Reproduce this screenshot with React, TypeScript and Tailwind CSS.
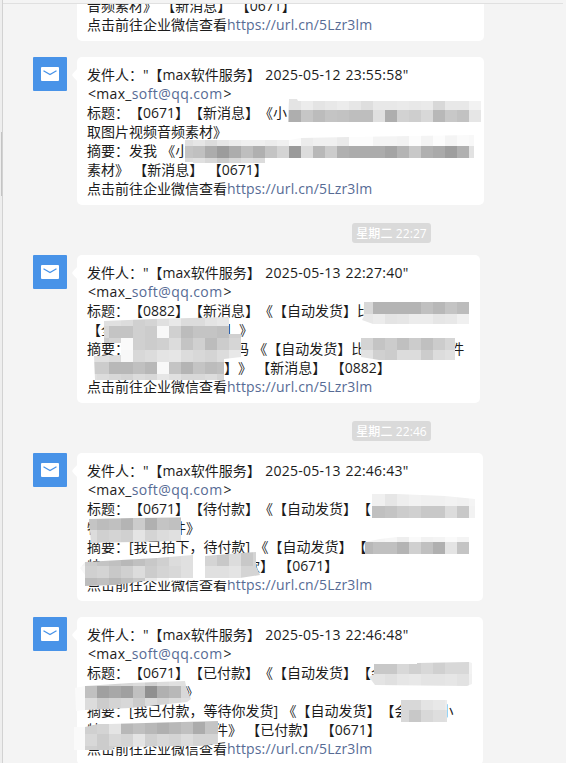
import type { ReactNode } from 'react';

interface MosaicPatch {
  // outline of the brushed area
  points: string;
  col: number;
  row: number;
  // grey levels (hex) for each 12px block, one string per row
  cells: string[];
}

interface MessageProps {
  top: number;
  time: string;
  className: string;
  patches: MosaicPatch[];
  children: ReactNode;
}

const BLOCK = 12;

const PATCHES_A: MosaicPatch[] = [
  {
    points: '289,99 297,99 298,101 482,101 482,122 288,122',
    col: 277,
    row: 98,
    cells: [
      'e4 e4 ec e4 e8 ec e6 de e8 e8 ea e8 ea d8 e8 e8 f2',
      'd0 ae c6 bc c4 c2 be be e0 ae d2 ce d8 b8 c8 c2 e6',
    ],
  },
  {
    points: '185,140 290,140 301,138 349,137 474,135 474,158 265,158 265,163 193,163 193,162 185,162',
    col: 181,
    row: 134,
    cells: [
      'e0 e6 dc e6 ec f0 f0 ec f0 fa ec f0 f0 ea fc fc f4 f4 f2 fc f4 fc f4 fa f8',
      'c4 c0 ac 9c ac be b0 c4 d4 9a dc b8 cc b0 ac ac ac a4 b4 c8 b0 aa 9e b0 e2',
      'dc e0 d8 cc d8 e0 dc',
    ],
  },
];

const PATCHES_B: MosaicPatch[] = [
  {
    points: '364,302 469,302 469,324 373,324 362,320 364,316',
    col: 361,
    row: 302,
    cells: ['d8 b4 b4 b4 b4 c0 b8 c4 bc c0', 'e8 ec e4 e6 ec ec e6 e8 f0 f2'],
  },
  {
    points:
      '104,321 153,319 229,317 229,334 241,334 241,357 224,359 224,380 95,380 94,356 121,355 121,343 104,343',
    col: 85,
    row: 314,
    cells: [
      'e0 e0 e0 dc d0 d4 e0 e8 dc dc e4 e8 e8',
      'd8 d8 c4 c4 d0 cc f8 d0 bc c4 c4 c0 d0',
      'd8 cc d4 fa d0 cc d0 dc c4 d0 bc cc d6',
      'e0 e0 dc f8 d8 dc e4 e6 dc d8 d4 dc e8',
      'cc cc b8 b8 c0 b8 f8 c4 b4 c4 bc c0 c0',
      'e0 dc d8 d4 dc d8 e6 e0 d8 d8 dc d4 d4',
    ],
  },
  {
    points: '361,338 455,338 455,360 379,360 361,357',
    col: 361,
    row: 338,
    cells: ['d4 c4 cc c0 cc c0 cc d6', 'e2 d0 cc dc dc cc dc e0'],
  },
];

const PATCHES_C: MosaicPatch[] = [
  {
    points: '372,494 397,494 445,496 475,499 475,518 372,518',
    col: 361,
    row: 494,
    cells: ['f0 f0 e6 ee f2 f0 f0 f2 f0 f4', 'c0 c0 c4 cc d0 c8 c8 dc c8 f2'],
  },
  {
    points: '89,519 181,517 181,541 91,543',
    col: 85,
    row: 506,
    cells: ['dc dc dc dc dc dc dc dc', 'c4 bc c0 b4 cc b0 c4 c0', 'dc d0 d4 d0 e4 d4 dc e0', 'dc dc dc dc dc dc dc dc'],
  },
  {
    points: '365,542 380,539 397,537 469,537 469,554 365,554',
    col: 361,
    row: 530,
    cells: ['f4 f4 f6 ee fa f2 f4 fa f4', 'b8 c0 c0 b4 d0 c0 b0 e4 c4'],
  },
  {
    points: '80,568 85,562 157,558 193,555 193,577 230,577 230,580 145,581 115,585 85,586 85,575',
    col: 73,
    row: 554,
    cells: [
      'f4 cc c4 c0 b8 c0 c8 d0 dc e0 ff ff ff ff',
      'f8 d0 d4 c8 d0 dc cc d4 d8 e0 ff ff ff ff',
      'f8 bc c0 b8 c0 c8 e8 f4 ff ff ff ff ff ff',
    ],
  },
  {
    points: '205,556 241,553 256,552 256,566 260,575 240,578 205,578',
    col: 205,
    row: 542,
    cells: ['d8 d8 dc c8 d4', 'd4 c8 dc c8 d4', 'e0 e0 e4 d4 d4'],
  },
];

const PATCHES_D: MosaicPatch[] = [
  {
    points: '374,664 417,664 417,663 469,662 472,663 472,684 467,686 375,685 369,677 374,674',
    col: 361,
    row: 662,
    cells: ['c8 c8 c8 d8 d0 d8 d0 d8 d8 f2', 'e6 e4 e0 e6 e8 e4 e4 e6 e2 f0'],
  },
  {
    points: '75,688 85,686 130,683 185,681 187,690 191,699 187,702 150,706 130,708 85,710 76,711',
    col: 73,
    row: 674,
    cells: [
      'fa dc d8 d4 d8 dc d0 dc e0 e0',
      'fa c0 a0 a8 a0 c0 90 b0 b8 d8',
      'fa dc cc d4 d8 cc dc d4 dc e0',
      'fa f0 f0 f0 f0 f0 f0 f0 f0 f0',
    ],
  },
  {
    points: '401,700 447,700 447,722 401,722',
    col: 397,
    row: 698,
    cells: ['d8 d8 e4 e8 ec', 'd8 c8 d8 de e0'],
  },
  {
    points: '74,727 85,727 98,724 109,724 218,721 218,744 200,746 115,747 112,750 74,750',
    col: 73,
    row: 710,
    cells: [
      'fa e0 e0 e0 c8 c8 c8 c8 c8 c0 c0 c4 c8',
      'fa d0 d4 e4 b8 c0 b8 b0 b8 c0 ac c4 c4',
      'fa d8 cc d8 d4 e4 d0 d8 d4 dc d4 d4 d8',
      'fa d0 cc d0 d8 e4 e4 e4 e4 e4 e4 e4 e4',
    ],
  },
];

function Mosaic({ patch, id }: { patch: MosaicPatch; id: string }) {
  return (
    <g clipPath={`url(#${id})`}>
      <clipPath id={id}>
        <polygon points={patch.points} />
      </clipPath>
      {patch.cells.map((line, r) =>
        line.split(' ').map((grey, c) => (
          <rect
            key={`${r}-${c}`}
            x={patch.col + c * BLOCK}
            y={patch.row + r * BLOCK}
            width={BLOCK}
            height={BLOCK}
            fill={`#${grey}${grey}${grey}`}
          />
        )),
      )}
    </g>
  );
}

function Avatar() {
  return (
    <div className="flex size-[34px] shrink-0 items-center justify-center rounded-[1px] bg-[#4893e8]">
      <svg width="18" height="14" viewBox="0 0 18 14">
        <rect width="18" height="14" rx="1" fill="#fff" />
        <path d="M2.5 3.8 L9 7.6 L15.5 3.8" fill="none" stroke="#4893e8" strokeWidth="1.3" />
      </svg>
    </div>
  );
}

function Line({ children }: { children: ReactNode }) {
  return <p className="flex h-[19px] items-center whitespace-pre [word-spacing:0.7px]">{children}</p>;
}

function LinkLine() {
  return (
    <Line>
      点击前往企业微信查看
      <a className="tracking-[0.16px] text-[#576b95]">https://url.cn/5Lzr3lm</a>
    </Line>
  );
}

function Sender({ time }: { time: string }) {
  return (
    <>
      <Line>
        发件人："【max软件服务】<span className="tracking-[0.25px]"> {time}"</span>
      </Line>
      <Line>
        <span className="ml-px tracking-[0.3px]">&lt;max_</span>
        <a className="tracking-[0.42px] text-[#576b95]">soft@qq.com</a>
        <span className="ml-px">&gt;</span>
      </Line>
    </>
  );
}

function Message({ top, time, className, patches, children }: MessageProps) {
  return (
    <div className="flex pl-[33px]">
      <Avatar />
      <div className={`relative ml-[10px] h-[148px] rounded-[5px] bg-white pt-2 pl-[10px] ${className}`}>
        <svg className="absolute top-[11px] -left-[5px]" width="6" height="14" viewBox="0 0 6 14">
          <path d="M6 0 L0.5 6 Q0 7 0.5 8 L6 14 Z" fill="#fff" />
        </svg>
        <Sender time={time} />
        {children}
        <LinkLine />
        <svg
          className="absolute top-0 left-0 overflow-visible"
          width="406"
          height="148"
          viewBox={`77 ${top} 406 148`}
          shapeRendering="crispEdges"
        >
          {patches.map((patch, i) => (
            <Mosaic key={i} patch={patch} id={`m${top}-${i}`} />
          ))}
        </svg>
      </div>
    </div>
  );
}

function TimeLabel({ text }: { text: string }) {
  return (
    <div className="mt-[18px] mb-3 ml-[352px] flex h-5 w-[79px] items-center justify-center rounded-[3px] bg-[#dadada] text-[12px] font-medium tracking-[0.1px] whitespace-pre text-white">
      {text}
    </div>
  );
}

export default function App() {
  return (
    <div
      lang="zh-CN"
      className="flex h-[763px] w-[566px] overflow-hidden bg-[#f4f4f4] font-['Open_Sans','Noto_Sans_CJK_SC',sans-serif] text-[14px] leading-[19px] text-[#1c1c1c] [text-spacing-trim:space-all]"
    >
      <div className="relative w-full">
        <div className="h-[3px]" />
        <div className="h-px w-[563px] bg-[#e0e0e0]" />
        <div className="h-[37px] overflow-hidden pl-[77px]">
          <div className="-mt-2 h-[45px] w-[407px] rounded-b-[5px] bg-white pl-[10px]">
            <Line>音频素材》 【新消息】 【0671】</Line>
            <LinkLine />
          </div>
        </div>

        <div className="mt-4">
          <Message top={57} time="2025-05-12 23:55:58" className="w-[407px]" patches={PATCHES_A}>
            <Line>标题：【0671】【新消息】《小</Line>
            <Line>取图片视频音频素材》</Line>
            <Line>摘要：发我 《小</Line>
            <Line>素材》 【新消息】 【0671】</Line>
          </Message>
        </div>

        <TimeLabel text="星期二 22:27" />
        <Message top={255} time="2025-05-13 22:27:40" className="w-[403px]" patches={PATCHES_B}>
          <Line>
            标题：【0882】【新消息】《【自动发货】比<span className="ml-[84px]">件</span>
          </Line>
          <Line>
            【全<span className="ml-[110px]">】》</span>
          </Line>
          <Line>
            摘要：<span className="ml-[106px]">码 《【自动发货】比</span>
            <span className="ml-[85px]">件</span>
          </Line>
          <Line>
            <span className="ml-[137px]">】》 【新消息】 【0882】</span>
          </Line>
        </Message>

        <TimeLabel text="星期二 22:46" />
        <Message top={453} time="2025-05-13 22:46:43" className="w-[406px]" patches={PATCHES_C}>
          <Line>标题：【0671】【待付款】《【自动发货】【</Line>
          <Line>
            特<span className="ml-[71px]">件》</span>
          </Line>
          <Line>摘要：[我已拍下，待付款] 《【自动发货】【</Line>
          <Line>
            特<span className="ml-[145px]">款】 【0671】</span>
          </Line>
        </Message>

        <div className="mt-4">
          <Message top={617} time="2025-05-13 22:46:48" className="w-[406px]" patches={PATCHES_D}>
            <Line>标题：【0671】【已付款】《【自动发货】【会</Line>
            <Line>
              <span className="ml-[98px]">》</span>
            </Line>
            <Line>
              摘要：[我已付款，等待你发货] 《【自动发货】【会<span className="ml-[31px]">小</span>
            </Line>
            <Line>
              特<span className="ml-[113px]">件》 【已付款】 【0671】</span>
            </Line>
          </Message>
        </div>

        {/* window edge and scroll thumb of the session list */}
        <div className="absolute top-0 left-0 h-full w-[3px] border-r border-[#d2d2d2] bg-[#eeeeee]" />
        <div className="absolute top-[132px] left-px h-16 w-px bg-[#c4c4c4]" />
      </div>
    </div>
  );
}
